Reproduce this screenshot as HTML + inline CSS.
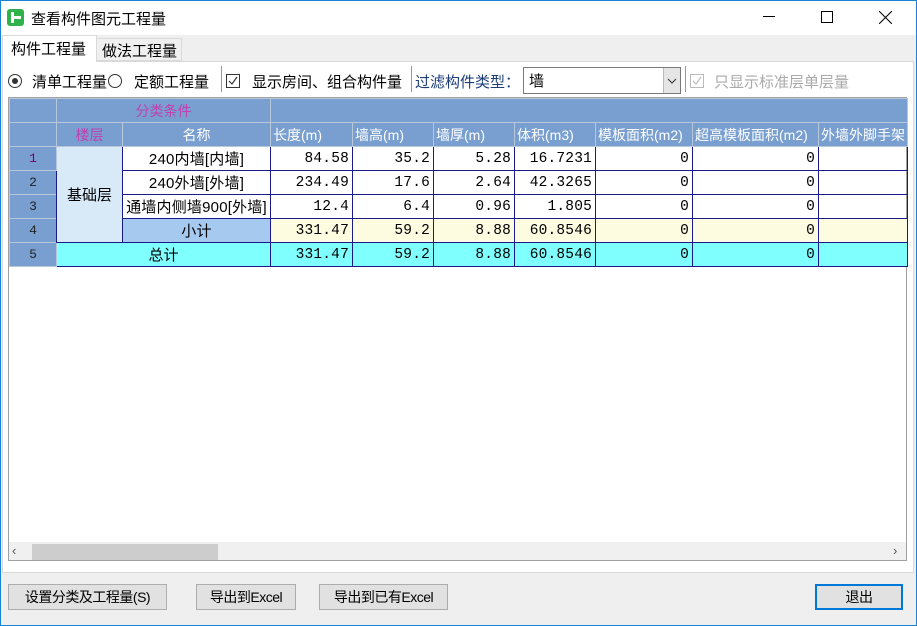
<!DOCTYPE html>
<html><head><meta charset="utf-8"><style>
*{margin:0;padding:0;box-sizing:border-box}
body{width:917px;height:626px;position:relative;background:#efefef;font-family:"Liberation Sans","Noto Sans CJK SC",sans-serif;font-size:15px;color:#000;overflow:hidden}
.a{position:absolute}
.win{left:0;top:0;width:917px;height:626px;border:1px solid #1883d7}
.title{left:1px;top:1px;width:915px;height:34px;background:#fff}
.panel{left:2px;top:61px;width:912px;height:512px;background:#fff;border:1px solid #d9d9d9}
table{border-collapse:collapse;table-layout:fixed;position:absolute;left:9px;top:98px}
td{height:24px;padding:0 3px;white-space:nowrap;overflow:hidden;font-size:14.5px}
.h{background:#789fd0;color:#fff;border:1px solid #b8c8dc;font-size:14px;padding:0 2px}
.m{color:#c040b0}
.rn{background:#789fd0;color:#222;text-align:center;border:1px solid #b8c8dc;font-family:"Liberation Mono",monospace;font-size:13px}
.d{border:1px solid #1a1a8a;text-align:right;font-family:"Liberation Mono",monospace;font-size:14.5px;letter-spacing:0.2px}
.c{text-align:center}
.btn{background:#e1e1e1;border:1px solid #adadad;height:26px;top:584px;text-align:center;line-height:24px;font-size:14px;letter-spacing:-0.5px}
</style></head><body>
<div class="a win"></div>
<div class="a title"></div>
<div class="a" style="left:7px;top:9px;width:17px;height:17px;background:#2fb24a;border-radius:3px"></div>
<div class="a" style="left:11px;top:12px;width:3px;height:11px;background:#fff"></div>
<div class="a" style="left:13px;top:16px;width:8px;height:3px;background:#fff"></div>
<div class="a" style="left:31px;top:8px;font-size:15px">查看构件图元工程量</div>
<div class="a" style="left:763px;top:16px;width:12px;height:1px;background:#000"></div>
<div class="a" style="left:821px;top:11px;width:12px;height:12px;border:1px solid #000"></div>
<svg class="a" style="left:879px;top:11px" width="13" height="13"><path d="M0 0L13 13M13 0L0 13" stroke="#000" stroke-width="1"/></svg>

<div class="a" style="left:96px;top:38px;width:86px;height:23px;background:#f0f0f0;border:1px solid #d9d9d9"></div>
<div class="a" style="left:102px;top:40px;font-size:15px">做法工程量</div>
<div class="a panel"></div>
<div class="a" style="left:2px;top:35px;width:95px;height:27px;background:#fff;border:1px solid #d9d9d9;border-bottom:none"></div>
<div class="a" style="left:11px;top:38px;font-size:15px">构件工程量</div>

<div class="a" style="left:8px;top:74px;width:14px;height:14px;border:1px solid #333;border-radius:50%"></div>
<div class="a" style="left:12px;top:78px;width:6px;height:6px;background:#333;border-radius:50%"></div>
<div class="a" style="left:32px;top:71px">清单工程量</div>
<div class="a" style="left:108px;top:74px;width:14px;height:14px;border:1px solid #333;border-radius:50%"></div>
<div class="a" style="left:134px;top:71px">定额工程量</div>
<div class="a" style="left:221px;top:66px;width:1px;height:26px;background:#999"></div>
<div class="a" style="left:226px;top:74px;width:14px;height:14px;border:1px solid #333"></div>
<svg class="a" style="left:228px;top:76px" width="10" height="10"><path d="M1 5L4 8L9 1" stroke="#333" fill="none" stroke-width="1.2"/></svg>
<div class="a" style="left:252px;top:71px">显示房间、组合构件量</div>
<div class="a" style="left:411px;top:66px;width:1px;height:26px;background:#999"></div>
<div class="a" style="left:415px;top:71px;color:#1c3d7a">过滤构件类型：</div>
<div class="a" style="left:523px;top:67px;width:158px;height:27px;border:1px solid #7a7a7a;background:#fff"></div>
<div class="a" style="left:529px;top:70px">墙</div>
<div class="a" style="left:663px;top:68px;width:17px;height:25px;background:#e5e5e5;border-left:1px solid #bbb"></div>
<svg class="a" style="left:667px;top:78px" width="10" height="6"><path d="M1 1L5 5L9 1" stroke="#333" fill="none"/></svg>
<div class="a" style="left:685px;top:66px;width:1px;height:26px;background:#999"></div>
<div class="a" style="left:690px;top:74px;width:14px;height:14px;border:1px solid #bbb"></div>
<svg class="a" style="left:692px;top:76px" width="10" height="10"><path d="M1 5L4 8L9 1" stroke="#bbb" fill="none" stroke-width="1.2"/></svg>
<div class="a" style="left:714px;top:71px;color:#aaa">只显示标准层单层量</div>

<div class="a" style="left:8px;top:97px;width:899px;height:464px;border:1px solid #a0a0a0;background:#fff"></div>
<table>
<colgroup><col style="width:47px"><col style="width:66px"><col style="width:148px"><col style="width:82px"><col style="width:81px"><col style="width:81px"><col style="width:81px"><col style="width:97px"><col style="width:126px"><col style="width:88px"></colgroup>
<tr><td class="h"></td><td class="h c m" colspan="2">分类条件</td><td class="h" colspan="7"></td></tr>
<tr><td class="h"></td><td class="h c m">楼层</td><td class="h c">名称</td><td class="h">长度(m)</td><td class="h">墙高(m)</td><td class="h">墙厚(m)</td><td class="h">体积(m3)</td><td class="h">模板面积(m2)</td><td class="h">超高模板面积(m2)</td><td class="h">外墙外脚手架</td></tr>
<tr><td class="rn" style="color:#800060">1</td><td rowspan="4" class="c" style="background:#d8e9f8;border:1px solid #1a1a8a;font-size:15px">基础层</td><td class="d c" style="font-family:inherit;font-size:15px">240内墙[内墙]</td><td class="d">84.58</td><td class="d">35.2</td><td class="d">5.28</td><td class="d">16.7231</td><td class="d">0</td><td class="d">0</td><td class="d"></td></tr>
<tr><td class="rn">2</td><td class="d c" style="font-family:inherit;font-size:15px">240外墙[外墙]</td><td class="d">234.49</td><td class="d">17.6</td><td class="d">2.64</td><td class="d">42.3265</td><td class="d">0</td><td class="d">0</td><td class="d"></td></tr>
<tr><td class="rn">3</td><td class="d c" style="font-family:inherit;padding:0 1px;font-size:15px">通墙内侧墙900[外墙]</td><td class="d">12.4</td><td class="d">6.4</td><td class="d">0.96</td><td class="d">1.805</td><td class="d">0</td><td class="d">0</td><td class="d"></td></tr>
<tr style="background:#fdfbe0"><td class="rn">4</td><td class="d c" style="font-family:inherit;background:#a6c9ef;font-size:15px">小计</td><td class="d">331.47</td><td class="d">59.2</td><td class="d">8.88</td><td class="d">60.8546</td><td class="d">0</td><td class="d">0</td><td class="d"></td></tr>
<tr style="background:#80ffff"><td class="rn">5</td><td colspan="2" class="c" style="border:1px solid #1a1a8a;font-size:15px">总计</td><td class="d">331.47</td><td class="d">59.2</td><td class="d">8.88</td><td class="d">60.8546</td><td class="d">0</td><td class="d">0</td><td class="d"></td></tr>
</table>
<div class="a" style="left:9px;top:542px;width:897px;height:18px;background:#f0f0f0"></div>
<div class="a" style="left:32px;top:544px;width:186px;height:16px;background:#cdcdcd"></div>
<div class="a" style="left:12px;top:543px;font-size:13px;color:#555">‹</div>
<div class="a" style="left:893px;top:543px;font-size:13px;color:#555">›</div>

<div class="a btn" style="left:8px;width:159px">设置分类及工程量(S)</div>
<div class="a btn" style="left:196px;width:100px">导出到Excel</div>
<div class="a btn" style="left:319px;width:129px">导出到已有Excel</div>
<div class="a btn" style="left:815px;width:88px;border:2px solid #0078d7;line-height:22px">退出</div>
</body></html>
